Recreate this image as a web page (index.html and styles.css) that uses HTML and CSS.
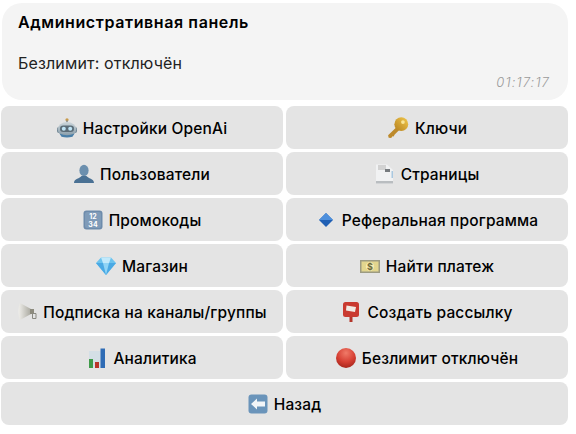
FILE: index.html
```html
<!DOCTYPE html>
<html lang="ru">
  <head>
    <meta charset="UTF-8" />
    <meta name="viewport" content="width=device-width,initial-scale=1" />
    <title>Административная панель</title>
    <link rel="stylesheet" href="styles.css">
  </head>
  <body>
    <div class="message">
      <div class="message-title">Административная панель</div>
      <div class="message-text">Безлимит: отключён</div>
      <div class="message-time">01:17:17</div>
    </div>
    <div class="keyboard">
      <button class="key">
        <svg class="icon" viewBox="0 0 20 20">
          <defs>
            <linearGradient id="robot-head" x1="0" y1="0" x2="0" y2="1">
              <stop offset="0" stop-color="#ccd6db" />
              <stop offset="1" stop-color="#8398a5" />
            </linearGradient>
            <radialGradient id="red-ball" cx="50%" cy="25%" r="75%">
              <stop offset="0" stop-color="#f07a68" />
              <stop offset="0.6" stop-color="#d63f33" />
              <stop offset="1" stop-color="#a8261c" />
            </radialGradient>
            <linearGradient id="key-gold" x1="0" y1="1" x2="1" y2="0">
              <stop offset="0" stop-color="#b5801f" />
              <stop offset="1" stop-color="#f2c94c" />
            </linearGradient>
            <linearGradient id="horn" x1="0" y1="0" x2="1" y2="0">
              <stop offset="0" stop-color="#efeeea" />
              <stop offset="1" stop-color="#a9a89f" />
            </linearGradient>
          </defs>
          <circle cx="10" cy="1.8" r="1.6" fill="#c89a4a" />
          <rect x="9.2" y="2.5" width="1.6" height="3" fill="#8a8f94" />
          <rect x="0" y="9" width="20" height="6" rx="2" fill="#6f8593" />
          <ellipse cx="10" cy="11.5" rx="9.3" ry="7.5" fill="url(#robot-head)" />
          <rect x="3" y="7.5" width="14" height="6.5" rx="3.2" fill="#5b6c77" />
          <circle cx="6.8" cy="10.7" r="2" fill="#bfe3f4" />
          <circle cx="13.2" cy="10.7" r="2" fill="#bfe3f4" />
          <path d="M2.5 15.5 Q10 19 17.5 15.5 L15.5 18.8 Q10 20.4 4.5 18.8 Z" fill="#4a7fa8" />
        </svg>
        Настройки OpenAi
      </button>
      <button class="key">
        <svg class="icon icon-large" viewBox="0 0 20 20">
          <path d="M9.5 8.5 L1 16.5 L1.5 18.8 L3.8 19 L5 17.5 L6 17.8 L7 16 L12 11 Z" fill="#bd8a2c" />
          <circle cx="13" cy="6.5" r="6.3" fill="url(#key-gold)" />
          <circle cx="14.5" cy="4.6" r="1.7" fill="#f9e596" />
        </svg>
        Ключи
      </button>
      <button class="key">
        <svg class="icon" viewBox="0 0 20 20">
          <ellipse cx="10" cy="6.5" rx="4.6" ry="5.8" fill="#6b8fae" />
          <path d="M0 19 C0 14.5 6 14.5 7.5 12 L12.5 12 C14 14.5 20 14.5 20 19 Z" fill="#4a7194" />
        </svg>
        Пользователи
      </button>
      <button class="key">
        <svg class="icon" viewBox="0 0 20 20">
          <path d="M1 0.5 H12 L18 6 V19.5 H1 Z" fill="#f1f2f3" />
          <path d="M3 1 H11 V6 H3 Z" fill="#d2d2d2" />
          <rect x="10" y="5" width="5" height="3" fill="#777b7f" />
          <path d="M1 17 H18 V19.5 H1 Z" fill="#b9bdc0" />
          <path d="M16.5 7 H18 V14 H16.5 Z" fill="#a9c8e0" />
        </svg>
        Страницы
      </button>
      <button class="key">
        <svg class="icon" viewBox="0 0 20 20">
          <rect x="0.5" y="0.5" width="19" height="19" rx="3" fill="#6d8bab" />
          <rect x="2" y="2" width="16" height="16" rx="2" fill="#7f9bb8" />
          <text class="icon-digits" x="10" y="9" text-anchor="middle">12</text>
          <text class="icon-digits" x="10" y="16.5" text-anchor="middle">34</text>
        </svg>
        Промокоды
      </button>
      <button class="key">
        <svg class="icon icon-small" viewBox="0 0 14 14">
          <path d="M7 0 L14 7 L7 14 L0 7 Z" fill="#1f5fb4" />
          <path d="M7 0 L14 7 H0 Z" fill="#4d8fdc" />
        </svg>
        Реферальная программа
      </button>
      <button class="key">
        <svg class="icon" viewBox="0 0 20 20">
          <path d="M0 7 L5 1.5 H15 L20 7 L10 19 Z" fill="#6cc3ee" />
          <path d="M5 1.5 H15 L13 7 H7 Z" fill="#c1e9fb" />
          <path d="M0 7 H20 L10 19 Z" fill="#4aa9e4" />
          <path d="M7 7 H13 L10 19 Z" fill="#8fd4f6" />
        </svg>
        Магазин
      </button>
      <button class="key">
        <svg class="icon" viewBox="0 0 20 20">
          <rect x="0" y="4" width="20" height="13" fill="#9c9b82" />
          <rect x="1.5" y="5.5" width="17" height="10" fill="#e2d68e" />
          <circle cx="10" cy="10.5" r="4.2" fill="#f4eab0" />
          <text class="icon-dollar" x="10" y="13.5" text-anchor="middle">$</text>
        </svg>
        Найти платеж
      </button>
      <button class="key">
        <svg class="icon" viewBox="0 0 20 20">
          <path d="M3 1 L14 7 V12 L3 18 C1 14 1 5 3 1 Z" fill="url(#horn)" />
          <rect x="13" y="7" width="4" height="5" fill="#8d8b7e" />
          <path d="M15.5 11.5 H19 V16.5 H15.5 Z" fill="none" stroke="#8a8a82" stroke-width="1" />
        </svg>
        Подписка на каналы/группы
      </button>
      <button class="key">
        <svg class="icon" viewBox="0 0 20 20">
          <rect x="8.5" y="13" width="3" height="7" fill="#b3362b" />
          <rect x="2" y="0" width="16" height="15" rx="2.5" fill="#c93a30" />
          <path d="M5.5 3.5 L15 5 L14 10 L5 8.5 Z" fill="#f1ebe4" />
        </svg>
        Создать рассылку
      </button>
      <button class="key">
        <svg class="icon" viewBox="0 0 20 20">
          <rect x="2" y="3" width="16" height="17" fill="#d4dfe6" />
          <rect x="2" y="11" width="4" height="9" fill="#3f9a4a" />
          <rect x="8" y="14" width="4" height="6" fill="#b9352a" />
          <rect x="13.5" y="0.5" width="4.5" height="19.5" fill="#2f6cb5" />
        </svg>
        Аналитика
      </button>
      <button class="key">
        <svg class="icon" viewBox="0 0 20 20">
          <circle cx="10" cy="10" r="10" fill="url(#red-ball)" />
        </svg>
        Безлимит отключён
      </button>
      <button class="key key-wide">
        <svg class="icon" viewBox="0 0 20 20">
          <rect x="0.5" y="0.5" width="19" height="19" rx="3" fill="#6a94ba" />
          <path d="M3 10 L9 4.5 V7.5 H17 V12.5 H9 V15.5 Z" fill="#f2f5f8" />
        </svg>
        Назад
      </button>
    </div>
  </body>
</html>
```

FILE: styles.css
```css
body {
  margin: 0;
  padding: 3px 8px 9px 1px;
  background-color: #fff;
  font-family: Inter, "Noto Sans", sans-serif;
  color: #000;
}

.message {
  margin-left: 1px;
  height: 97px;
  box-sizing: border-box;
  padding: 9px 16px 0;
  background-color: #f4f4f4;
  border-radius: 20px;
  position: relative;
}

.message-title {
  font-size: 16px;
  font-weight: 600;
  line-height: 20px;
  letter-spacing: 0.6px;
}

.message-text {
  margin-top: 21px;
  font-size: 16px;
  line-height: 20px;
  letter-spacing: 0.15px;
  color: #222;
}

.message-time {
  position: absolute;
  right: 18px;
  bottom: 10px;
  font-size: 13px;
  font-weight: 300;
  font-style: italic;
  letter-spacing: 1.1px;
  color: #9a9a9a;
}

.keyboard {
  display: grid;
  grid-template-columns: 1fr 1fr;
  gap: 3px;
  margin-top: 6px;
}

.key {
  display: flex;
  align-items: center;
  justify-content: center;
  gap: 6px;
  height: 43px;
  padding: 1px 0 0;
  border: none;
  border-radius: 8px;
  background-color: #e4e4e4;
  font-family: inherit;
  font-size: 15.5px;
  font-weight: 500;
  letter-spacing: 0.15px;
  color: #000;
}

.key-wide {
  grid-column: 1 / 3;
}

.icon {
  width: 20px;
  height: 20px;
  flex-shrink: 0;
}

.icon-large {
  width: 22px;
  height: 22px;
}

.icon-small {
  width: 14px;
  height: 14px;
  margin: 0 3px;
}

.icon-digits {
  font-size: 7px;
  font-weight: 700;
  fill: #fff;
}

.icon-dollar {
  font-size: 9px;
  font-weight: 700;
  fill: #6d6a3a;
}
```
